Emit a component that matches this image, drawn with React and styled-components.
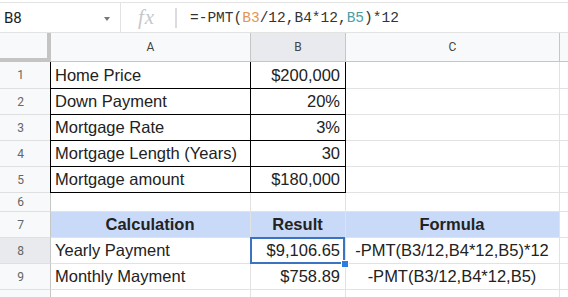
import React from "react";
import styled, { createGlobalStyle, css } from "styled-components";

const GlobalStyle = createGlobalStyle`
  body {
    margin: 0;
    background: #fff;
    font-family: "Liberation Sans", Arial, sans-serif;
  }
`;

const Page = styled.div`
  width: 568px;
  height: 297px;
  overflow: hidden;
  padding-top: 2px;
  box-sizing: border-box;
`;

const FormulaBar = styled.div`
  display: flex;
  align-items: center;
  height: 31px;
  border-top: 1px solid #e3e3e3;
  border-bottom: 1px solid #e3e3e3;
  box-sizing: border-box;
`;

const NameBox = styled.div`
  width: 121px;
  height: 100%;
  display: flex;
  align-items: center;
  justify-content: space-between;
  padding: 0 10px 0 4px;
  box-sizing: border-box;
  border-right: 1px solid #e3e3e3;
  font-family: Roboto, "Liberation Sans", sans-serif;
  font-size: 15px;
  color: #202124;
`;

const Caret = styled.span`
  width: 0;
  height: 0;
  border-left: 3.5px solid transparent;
  border-right: 3.5px solid transparent;
  border-top: 4px solid #777;
  margin-top: 2px;
`;

const Fx = styled.div`
  width: 54px;
  padding-right: 3px;
  box-sizing: border-box;
  text-align: center;
  font-family: "Liberation Serif", serif;
  font-style: italic;
  font-size: 21px;
  color: #c8c8c8;
  letter-spacing: 1px;
`;

const Divider = styled.div`
  width: 2px;
  height: 20px;
  background: #dadce0;
`;

const FormulaText = styled.div`
  padding-left: 13px;
  font-family: "Liberation Mono", "DejaVu Sans Mono", monospace;
  font-size: 14.5px;
  color: #333;
`;

const Ref = styled.span`
  color: ${(p) => p.$color};
`;

const Sheet = styled.div`
  display: grid;
  grid-template-columns: 51px 200px 95px 214px 1fr;
  grid-template-rows: 29px 27px 26px 26px 26px 26px 19px 26px 26px 26px 26px;
`;

const Corner = styled.div`
  background: #f8f9fa;
  border-right: 4px solid #c4c4c4;
  border-bottom: 4px solid #c4c4c4;
  box-sizing: border-box;
`;

const ColHead = styled.div`
  display: flex;
  align-items: center;
  justify-content: center;
  background: ${(p) => (p.$active ? "#e8eaed" : "#f8f9fa")};
  border-right: 1px solid #c4c7c5;
  border-bottom: 1px solid #c4c7c5;
  box-sizing: border-box;
  font-family: Roboto, "Liberation Sans", sans-serif;
  font-size: 12px;
  color: #444;
`;

const RowHead = styled.div`
  display: flex;
  align-items: center;
  justify-content: center;
  padding-right: 9px;
  background: ${(p) => (p.$active ? "#e8eaed" : "#f8f9fa")};
  border-right: 1px solid #c4c7c5;
  border-bottom: 1px solid #e0e0e0;
  box-sizing: border-box;
  font-family: Roboto, "Liberation Sans", sans-serif;
  font-size: 12px;
  color: #666;
`;

const Cell = styled.div`
  position: relative;
  display: flex;
  align-items: center;
  justify-content: ${(p) =>
    p.$align === "right" ? "flex-end" : p.$align === "center" ? "center" : "flex-start"};
  padding: 0 5px 0 4px;
  box-sizing: border-box;
  white-space: nowrap;
  font-size: 16.5px;
  color: #222;
  background: ${(p) => (p.$head ? "#c9daf8" : "#fff")};
  font-weight: ${(p) => (p.$head ? 700 : 400)};
  border-right: 1px solid ${(p) => (p.$boxed ? "#000" : "#e2e2e2")};
  border-bottom: 1px solid ${(p) => (p.$boxed ? "#000" : "#e2e2e2")};
  ${(p) =>
    p.$boxLeft &&
    css`
      box-shadow: -1px 0 0 #000;
    `}
  ${(p) =>
    p.$selected &&
    css`
      &::after {
        content: "";
        position: absolute;
        top: -1px;
        left: -1px;
        right: 0;
        bottom: -1px;
        border: 2px solid #3b72c2;
      }
      &::before {
        content: "";
        position: absolute;
        right: -4px;
        bottom: -5px;
        width: 6px;
        height: 6px;
        background: #2b7de0;
        border: 1px solid #fff;
        z-index: 2;
      }
    `}
`;

const rows = [
  { n: 1, a: "Home Price", b: "$200,000", boxed: true },
  { n: 2, a: "Down Payment", b: "20%", boxed: true },
  { n: 3, a: "Mortgage Rate", b: "3%", boxed: true },
  { n: 4, a: "Mortgage Length (Years)", b: "30", boxed: true },
  { n: 5, a: "Mortgage amount", b: "$180,000", boxed: true },
  { n: 6 },
  { n: 7, a: "Calculation", b: "Result", c: "Formula", head: true },
  { n: 8, a: "Yearly Payment", b: "$9,106.65", c: "-PMT(B3/12,B4*12,B5)*12", selected: true },
  { n: 9, a: "Monthly Mayment", b: "$758.89", c: "-PMT(B3/12,B4*12,B5)" },
  { n: 10, hideNum: true },
];

export default function App() {
  return (
    <Page>
      <GlobalStyle />
      <FormulaBar>
        <NameBox>
          B8
          <Caret />
        </NameBox>
        <Fx>fx</Fx>
        <Divider />
        <FormulaText>
          =-PMT(<Ref $color="#e3964f">B3</Ref>/12,B4*12,<Ref $color="#4a9ea6">B5</Ref>)*12
        </FormulaText>
      </FormulaBar>
      <Sheet>
        <Corner />
        <ColHead>A</ColHead>
        <ColHead $active>B</ColHead>
        <ColHead>C</ColHead>
        <ColHead />
        {rows.map((r) => (
          <React.Fragment key={r.n}>
            <RowHead $active={r.selected}>{r.hideNum ? null : r.n}</RowHead>
            <Cell $boxed={r.boxed} $boxLeft={r.boxed} $head={r.head} $align={r.head ? "center" : "left"}>
              {r.a}
            </Cell>
            <Cell $boxed={r.boxed} $head={r.head} $selected={r.selected} $align={r.head ? "center" : "right"}>
              {r.b}
            </Cell>
            <Cell $head={r.head} $align="center">
              {r.c}
            </Cell>
            <Cell />
          </React.Fragment>
        ))}
      </Sheet>
    </Page>
  );
}
